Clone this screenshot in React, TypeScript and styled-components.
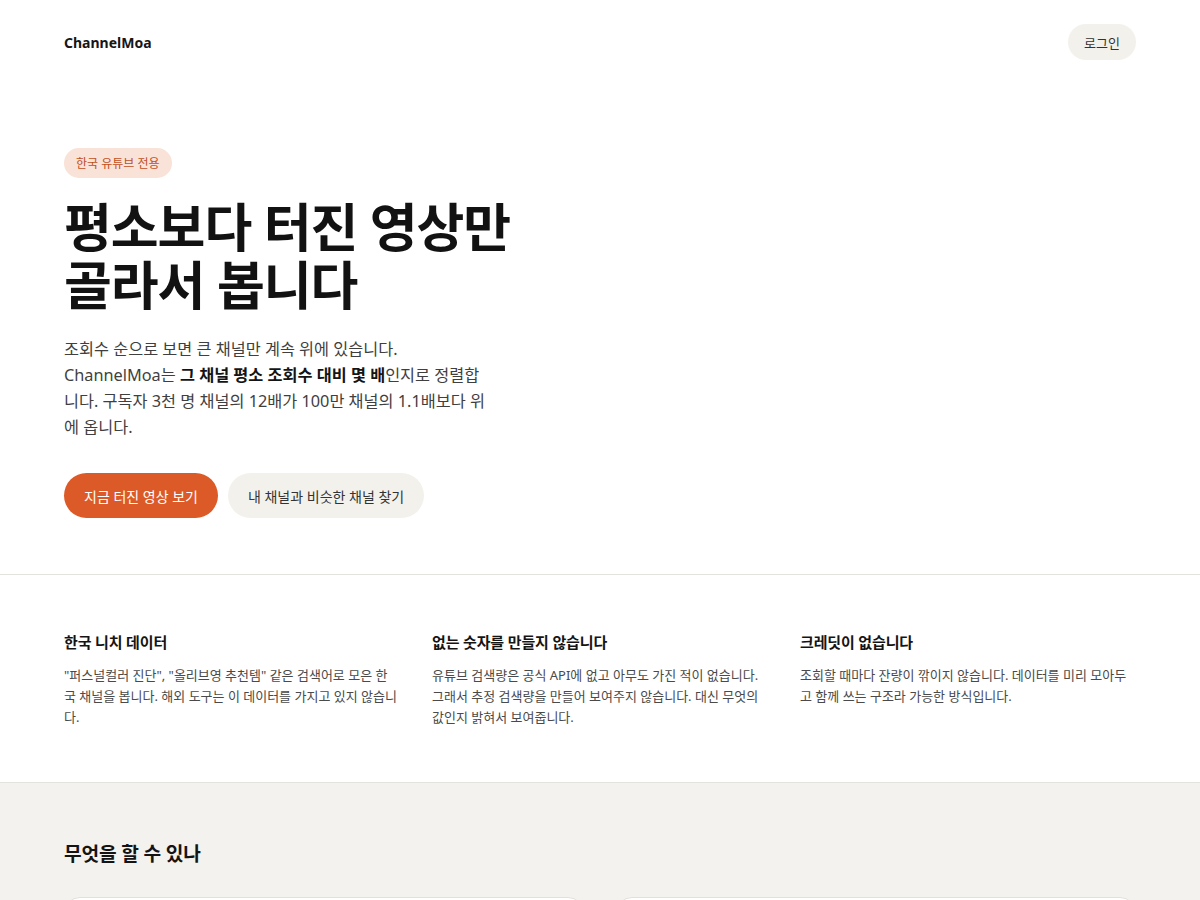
import styled, { createGlobalStyle } from "styled-components";

const GlobalStyle = createGlobalStyle`
  * {
    box-sizing: border-box;
  }
  body {
    margin: 0;
    background: #ffffff;
    color: #161616;
    font-family: "Noto Sans", "Noto Sans CJK KR", sans-serif;
  }
`;

const Page = styled.div`
  display: flex;
  flex-direction: column;
  width: 100%;
  min-height: 100vh;
`;

const Inner = styled.div`
  width: 100%;
  max-width: 1200px;
  margin: 0 auto;
  padding: 0 64px;
`;

const Header = styled(Inner)`
  display: flex;
  align-items: center;
  justify-content: space-between;
  height: 84px;
  .logo {
    font-size: 14px;
    font-weight: 700;
    color: #161616;
  }
`;

const PillButton = styled.button<{ $variant?: "primary" | "soft" }>`
  border: none;
  outline: none;
  cursor: pointer;
  border-radius: 999px;
  font-family: inherit;
  background: ${(p) => (p.$variant === "primary" ? "#dc5a27" : "#f3f1ec")};
  color: ${(p) => (p.$variant === "primary" ? "#ffffff" : "#333333")};
`;

const LoginButton = styled(PillButton)`
  height: 36px;
  padding: 0 16px;
  font-size: 13px;
`;

const Hero = styled(Inner)`
  padding-top: 64px;
  padding-bottom: 56px;
  display: flex;
  flex-direction: column;
  align-items: flex-start;
`;

const Badge = styled.span`
  display: inline-flex;
  align-items: center;
  height: 30px;
  padding: 0 12px;
  border-radius: 999px;
  background: #f9e2d7;
  color: #c0501f;
  font-size: 12px;
`;

const Title = styled.h1`
  margin: 20px 0 0;
  font-size: 52px;
  line-height: 58px;
  font-weight: 700;
  letter-spacing: -0.02em;
  color: #121212;
`;

const Lead = styled.p`
  margin: 22px 0 0;
  max-width: 424px;
  font-size: 16.3px;
  line-height: 26px;
  color: #3f3f3f;
  b {
    color: #141414;
    font-weight: 700;
  }
`;

const Actions = styled.div`
  display: flex;
  gap: 10px;
  margin-top: 33px;
`;

const CtaButton = styled(PillButton)`
  height: 45px;
  padding: 0 20px;
  font-size: 14px;
`;

const Features = styled.section`
  border-top: 1px solid #e4e2de;
  border-bottom: 1px solid #e4e2de;
`;

const FeatureGrid = styled(Inner)`
  display: grid;
  grid-template-columns: repeat(3, 1fr);
  column-gap: 32px;
  padding-top: 55px;
  padding-bottom: 54px;
`;

const Feature = styled.div`
  padding-right: 1px;
  h3 {
    margin: 0;
    font-size: 15px;
    line-height: 24px;
    font-weight: 700;
    letter-spacing: -0.01em;
    color: #141414;
  }
  p {
    margin: 11px 0 0;
    font-size: 13px;
    line-height: 21px;
    color: #4a4a4a;
  }
`;

const Capabilities = styled.section`
  flex: 1;
  background: #f4f2ee;
`;

const CapInner = styled(Inner)`
  padding-top: 56px;
  padding-bottom: 64px;
  h2 {
    margin: 0;
    font-size: 19.2px;
    line-height: 30px;
    font-weight: 700;
    letter-spacing: -0.01em;
    color: #141414;
  }
`;

const CardGrid = styled.div`
  display: grid;
  grid-template-columns: 1fr 1fr;
  gap: 32px;
  margin-top: 28px;
`;

const Card = styled.div`
  height: 220px;
  background: #ffffff;
  border: 1px solid #e2e0dc;
  border-radius: 16px;
`;

const features = [
  {
    title: "한국 니치 데이터",
    text: '"퍼스널컬러 진단", "올리브영 추천템" 같은 검색어로 모은 한국 채널을 봅니다. 해외 도구는 이 데이터를 가지고 있지 않습니다.',
  },
  {
    title: "없는 숫자를 만들지 않습니다",
    text: "유튜브 검색량은 공식 API에 없고 아무도 가진 적이 없습니다. 그래서 추정 검색량을 만들어 보여주지 않습니다. 대신 무엇의 값인지 밝혀서 보여줍니다.",
  },
  {
    title: "크레딧이 없습니다",
    text: "조회할 때마다 잔량이 깎이지 않습니다. 데이터를 미리 모아두고 함께 쓰는 구조라 가능한 방식입니다.",
  },
];

const App = () => {
  return (
    <Page>
      <GlobalStyle />
      <Header as="header">
        <span className="logo">ChannelMoa</span>
        <LoginButton>로그인</LoginButton>
      </Header>
      <Hero as="main">
        <Badge>한국 유튜브 전용</Badge>
        <Title>
          평소보다 터진 영상만
          <br />
          골라서 봅니다
        </Title>
        <Lead>
          조회수 순으로 보면 큰 채널만 계속 위에 있습니다. ChannelMoa는{" "}
          <b>그 채널 평소 조회수 대비 몇 배</b>인지로 정렬합니다. 구독자 3천 명
          채널의 12배가 100만 채널의 1.1배보다 위에 옵니다.
        </Lead>
        <Actions>
          <CtaButton $variant="primary">지금 터진 영상 보기</CtaButton>
          <CtaButton $variant="soft">내 채널과 비슷한 채널 찾기</CtaButton>
        </Actions>
      </Hero>
      <Features>
        <FeatureGrid>
          {features.map((f) => (
            <Feature key={f.title}>
              <h3>{f.title}</h3>
              <p>{f.text}</p>
            </Feature>
          ))}
        </FeatureGrid>
      </Features>
      <Capabilities>
        <CapInner>
          <h2>무엇을 할 수 있나</h2>
          <CardGrid>
            <Card />
            <Card />
          </CardGrid>
        </CapInner>
      </Capabilities>
    </Page>
  );
};

export default App;
